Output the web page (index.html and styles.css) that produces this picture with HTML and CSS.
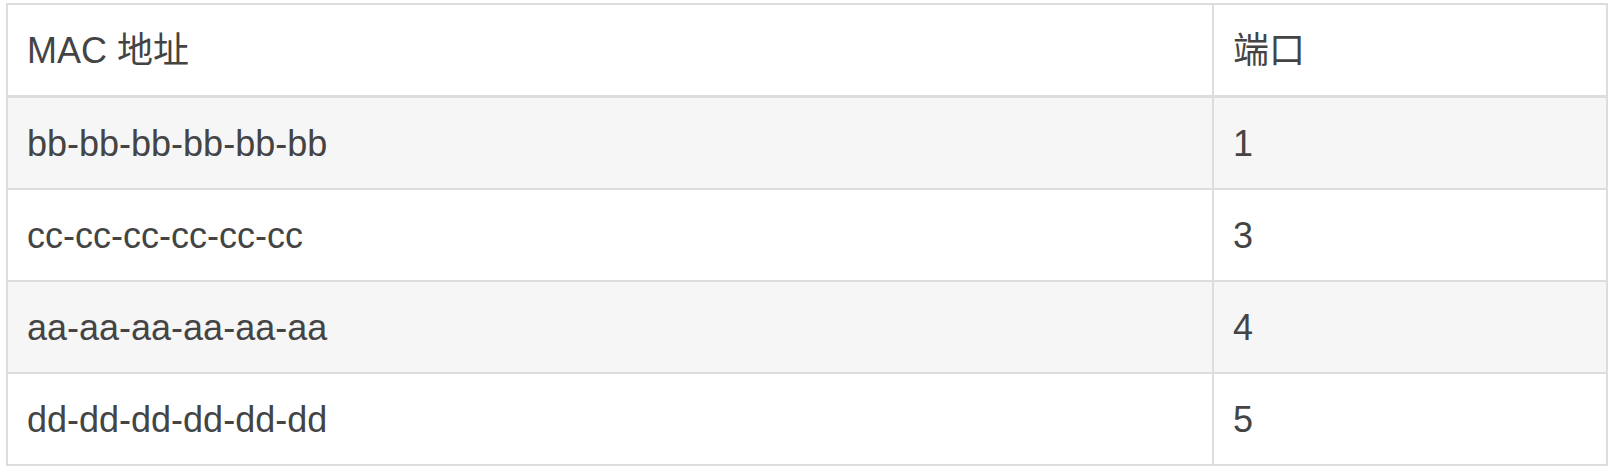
FILE: index.html
```html
<!DOCTYPE html>
<html lang="zh">
<head>
<meta charset="utf-8">
<title>MAC 地址表</title>
<link rel="stylesheet" href="styles.css">
</head>
<body>
<table class="mac-table">
  <thead>
    <tr><th class="col-mac">MAC 地址</th><th class="col-port">端口</th></tr>
  </thead>
  <tbody>
    <tr class="odd"><td>bb-bb-bb-bb-bb-bb</td><td>1</td></tr>
    <tr><td>cc-cc-cc-cc-cc-cc</td><td>3</td></tr>
    <tr class="odd"><td>aa-aa-aa-aa-aa-aa</td><td>4</td></tr>
    <tr><td>dd-dd-dd-dd-dd-dd</td><td>5</td></tr>
  </tbody>
</table>
</body>
</html>
```
FILE: styles.css
```css
html, body {
  margin: 0;
  padding: 0;
  background: #fff;
}
body {
  padding: 3px 8px 0 6px;
  font-family: "Liberation Sans", Arial, "Noto Sans CJK SC", sans-serif;
  font-size: 36px;
  line-height: 50px;
  color: #444;
}
.mac-table {
  width: 1602px;
  border-collapse: collapse;
  border: 2px solid #ddd;
}
.mac-table th,
.mac-table td {
  border: 2px solid #ddd;
  padding: 21px 19px 19px;
  text-align: left;
  font-weight: normal;
  vertical-align: top;
  height: 50px;
}
.mac-table thead th {
  border-bottom-width: 3px;
}
.col-port {
  width: 354px;
}
.mac-table tr.odd td {
  background: #f6f6f6;
}
```
